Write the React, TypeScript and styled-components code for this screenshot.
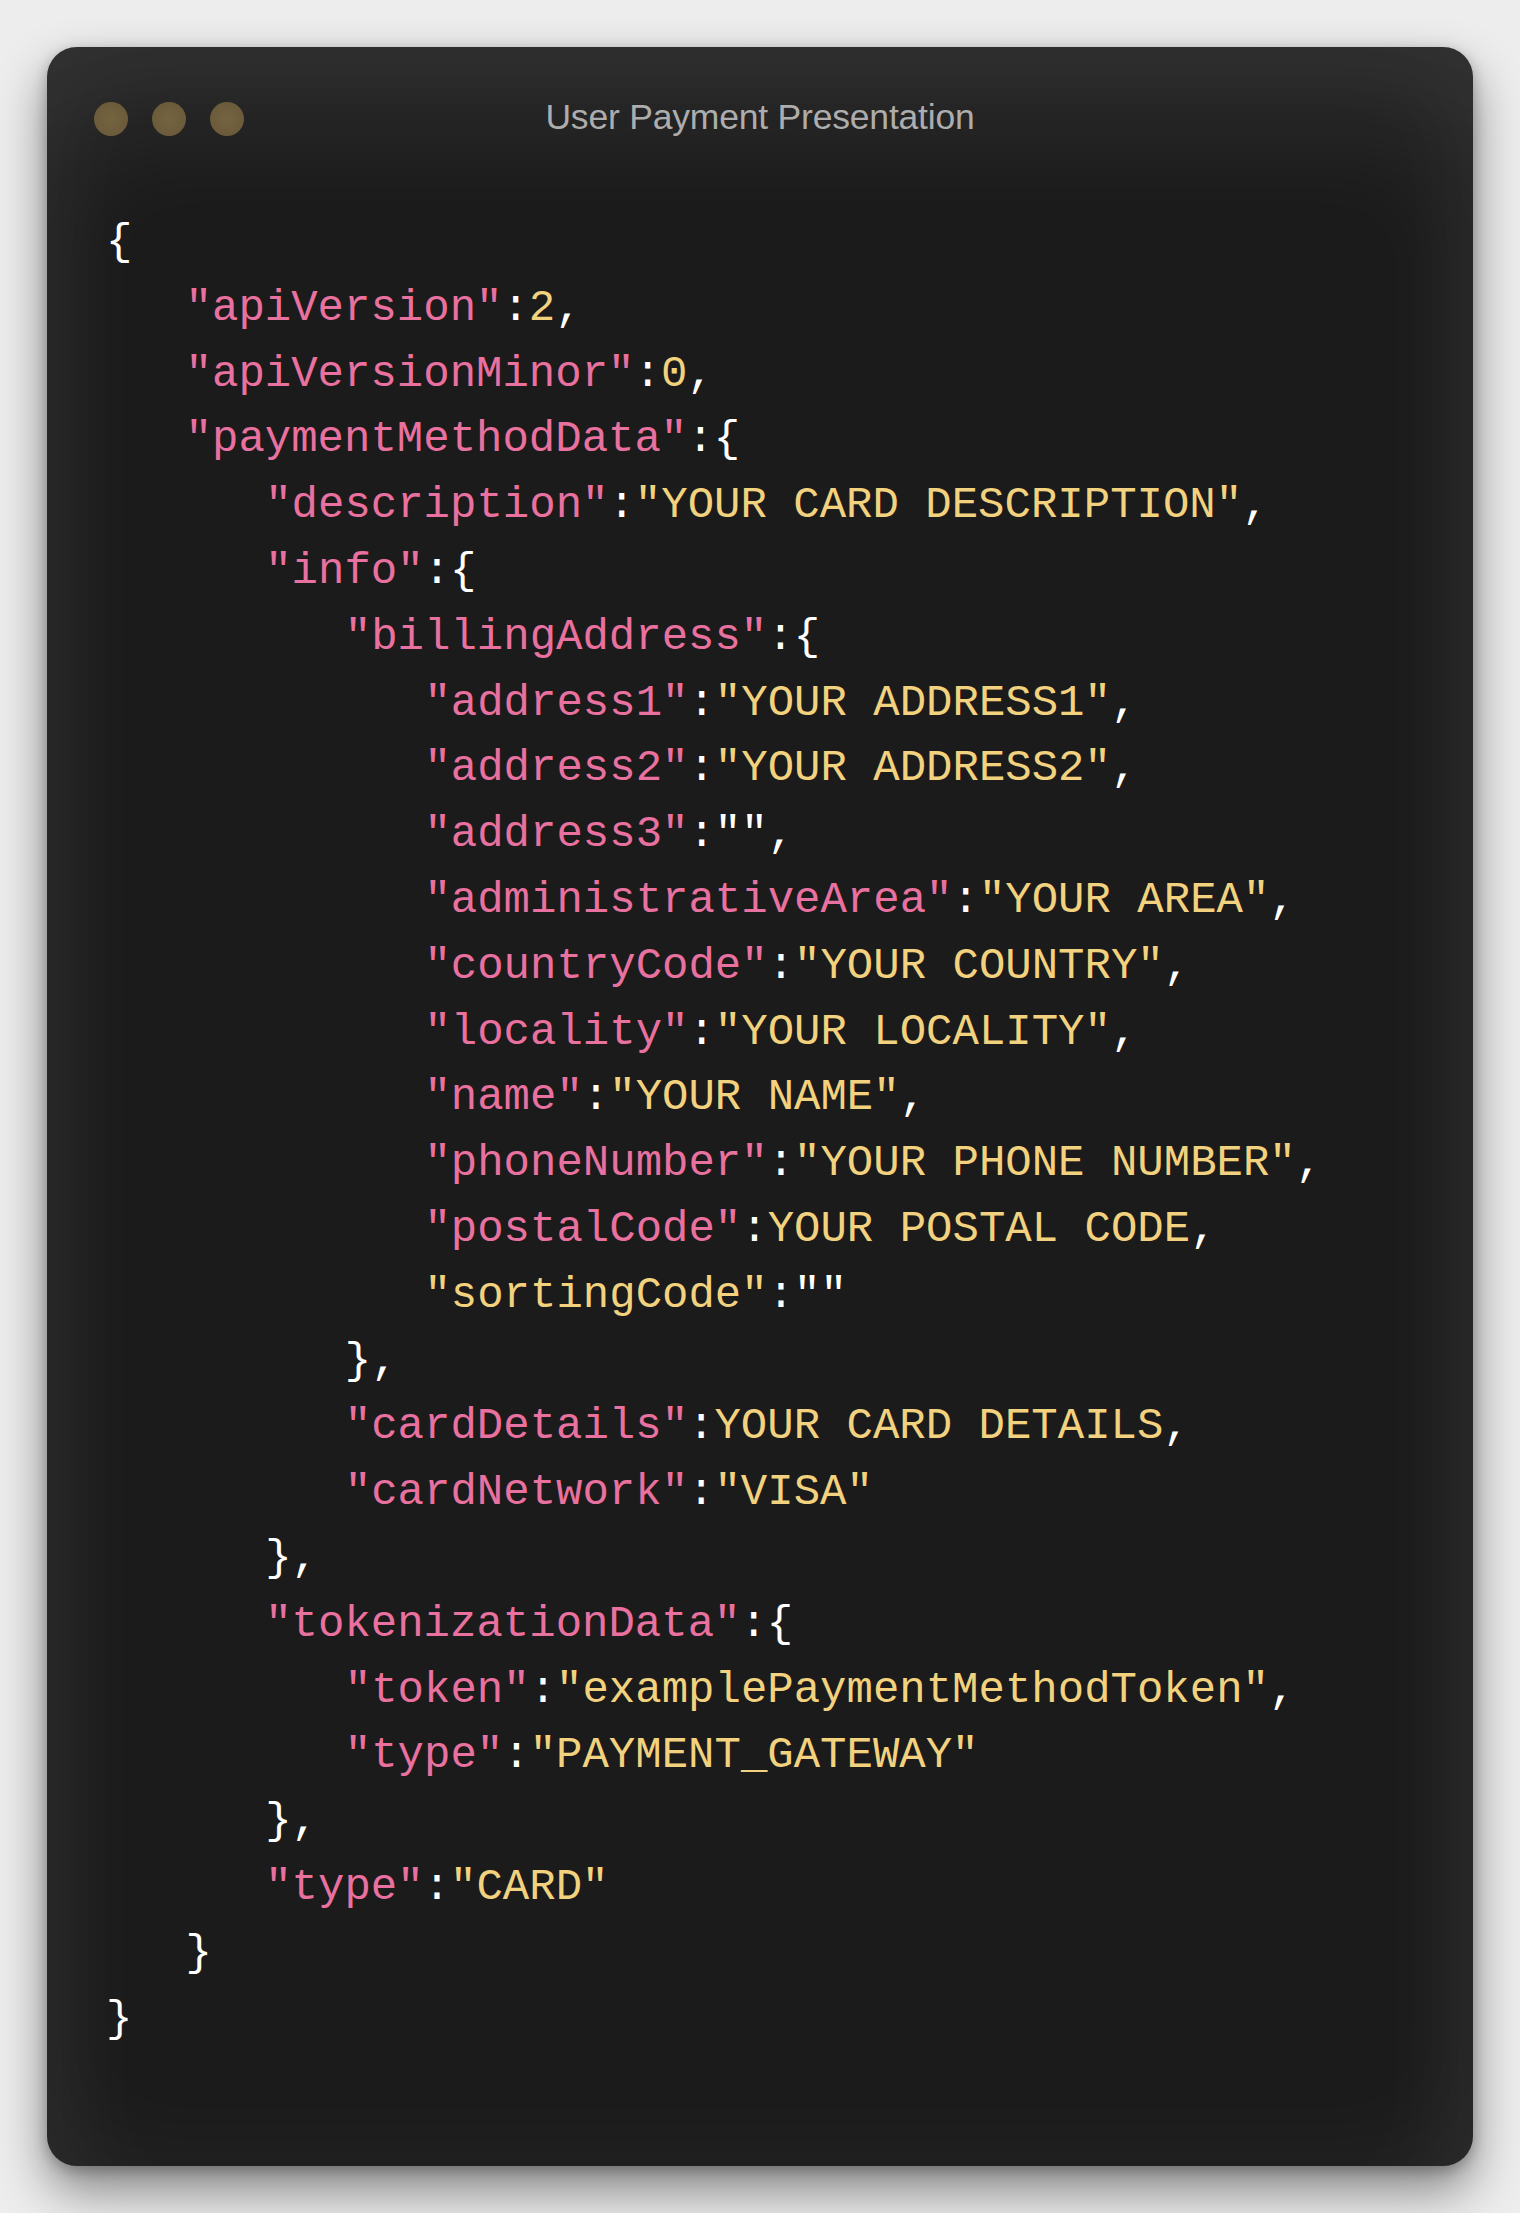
import React from "react";
import styled, { createGlobalStyle } from "styled-components";

const GlobalStyle = createGlobalStyle`
  html, body {
    margin: 0;
    padding: 0;
    background: #ededed;
  }
  * { box-sizing: border-box; }
`;

const Page = styled.div`
  padding: 47px;
  min-height: 2213px;
  background: #ededed;
`;

const Window = styled.div`
  width: 1426px;
  height: 2119px;
  border-radius: 30px;
  background: #1b1b1b;
  box-shadow:
    inset 0 80px 120px rgba(255, 255, 255, 0.08),
    inset 0 0 110px 12px rgba(255, 255, 255, 0.04),
    0 24px 50px rgba(0, 0, 0, 0.45),
    0 4px 14px rgba(0, 0, 0, 0.25);
  padding: 51px 59px 0 47px;
  overflow: hidden;
`;

const TitleBar = styled.div`
  display: grid;
  grid-template-columns: 1fr auto 1fr;
  align-items: center;
  height: 34px;
  margin-right: -12px;
`;

const Lights = styled.div`
  display: flex;
  gap: 24px;
`;

const Light = styled.span`
  display: block;
  width: 34px;
  height: 34px;
  border-radius: 50%;
  background: radial-gradient(circle at 50% 50%, #74643f 0%, #6b5b3b 70%, #5f5136 100%);
`;

const Title = styled.div`
  font-family: "Liberation Sans", Arial, sans-serif;
  font-size: 35.5px;
  color: #adadad;
  letter-spacing: -0.2px;
  white-space: nowrap;
  transform: translateY(-1px);
`;

const Code = styled.div`
  margin-top: 78px;
  padding-left: 12px;
  font-family: "Liberation Mono", "Courier New", monospace;
  font-size: 44px;
  line-height: 65.8px;
  color: #ffffff;
  white-space: pre;
`;

const Line = styled.div<{ $indent: number }>`
  padding-left: ${(p) => p.$indent * 79.6}px;
  height: 65.8px;
`;

const Key = styled.span`
  color: #e9719f;
`;

const Val = styled.span`
  color: #f2d27e;
`;

const Punct = styled.span`
  color: #ffffff;
`;

type Tok = { t: "k" | "v" | "p"; s: string };
type L = { i: number; toks: Tok[] };

const k = (s: string): Tok => ({ t: "k", s });
const v = (s: string): Tok => ({ t: "v", s });
const p = (s: string): Tok => ({ t: "p", s });

const lines: L[] = [
  { i: 0, toks: [p("{")] },
  { i: 1, toks: [k('"apiVersion"'), p(":"), v("2"), p(",")] },
  { i: 1, toks: [k('"apiVersionMinor"'), p(":"), v("0"), p(",")] },
  { i: 1, toks: [k('"paymentMethodData"'), p(":{")] },
  { i: 2, toks: [k('"description"'), p(":"), v('"YOUR CARD DESCRIPTION"'), p(",")] },
  { i: 2, toks: [k('"info"'), p(":{")] },
  { i: 3, toks: [k('"billingAddress"'), p(":{")] },
  { i: 4, toks: [k('"address1"'), p(":"), v('"YOUR ADDRESS1"'), p(",")] },
  { i: 4, toks: [k('"address2"'), p(":"), v('"YOUR ADDRESS2"'), p(",")] },
  { i: 4, toks: [k('"address3"'), p(':"",')] },
  { i: 4, toks: [k('"administrativeArea"'), p(":"), v('"YOUR AREA"'), p(",")] },
  { i: 4, toks: [k('"countryCode"'), p(":"), v('"YOUR COUNTRY"'), p(",")] },
  { i: 4, toks: [k('"locality"'), p(":"), v('"YOUR LOCALITY"'), p(",")] },
  { i: 4, toks: [k('"name"'), p(":"), v('"YOUR NAME"'), p(",")] },
  { i: 4, toks: [k('"phoneNumber"'), p(":"), v('"YOUR PHONE NUMBER"'), p(",")] },
  { i: 4, toks: [k('"postalCode"'), p(":"), v("YOUR POSTAL CODE"), p(",")] },
  { i: 4, toks: [v('"sortingCode"'), p(':""')] },
  { i: 3, toks: [p("},")] },
  { i: 3, toks: [k('"cardDetails"'), p(":"), v("YOUR CARD DETAILS"), p(",")] },
  { i: 3, toks: [k('"cardNetwork"'), p(":"), v('"VISA"')] },
  { i: 2, toks: [p("},")] },
  { i: 2, toks: [k('"tokenizationData"'), p(":{")] },
  { i: 3, toks: [k('"token"'), p(":"), v('"examplePaymentMethodToken"'), p(",")] },
  { i: 3, toks: [k('"type"'), p(":"), v('"PAYMENT_GATEWAY"')] },
  { i: 2, toks: [p("},")] },
  { i: 2, toks: [k('"type"'), p(":"), v('"CARD"')] },
  { i: 1, toks: [p("}")] },
  { i: 0, toks: [p("}")] },
];

function Token({ tok }: { tok: Tok }) {
  if (tok.t === "k") return <Key>{tok.s}</Key>;
  if (tok.t === "v") return <Val>{tok.s}</Val>;
  return <Punct>{tok.s}</Punct>;
}

export default function App() {
  return (
    <>
      <GlobalStyle />
      <Page>
        <Window>
          <TitleBar>
            <Lights>
              <Light />
              <Light />
              <Light />
            </Lights>
            <Title>User Payment Presentation</Title>
            <div />
          </TitleBar>
          <Code>
            {lines.map((l, idx) => (
              <Line key={idx} $indent={l.i}>
                {l.toks.map((t, j) => (
                  <Token key={j} tok={t} />
                ))}
              </Line>
            ))}
          </Code>
        </Window>
      </Page>
    </>
  );
}
